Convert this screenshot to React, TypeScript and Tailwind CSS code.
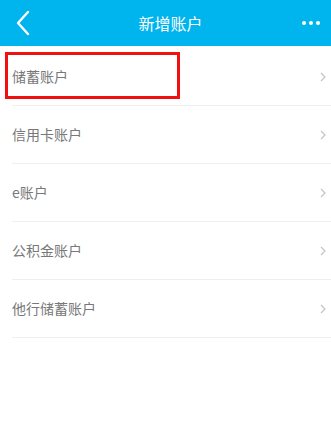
import React from 'react';

const accounts = ['储蓄账户', '信用卡账户', 'e账户', '公积金账户', '他行储蓄账户'];

export default function App() {
  return (
    <div
      className="w-[331px] h-[440px] bg-white overflow-hidden"
      style={{ fontFamily: '"Noto Sans CJK SC", "Noto Sans", sans-serif' }}
    >
      {/* Header */}
      <div className="h-[46px] bg-[#00b4ee] flex items-center justify-between px-[14px] relative">
        <svg width="16" height="26" viewBox="0 0 16 26" className="ml-[1px]">
          <path d="M13 2 L3 13 L13 24" fill="none" stroke="#fff" strokeWidth="2.4" strokeLinecap="round" strokeLinejoin="round" />
        </svg>
        <span className="absolute left-0 right-0 text-center text-white text-[16px] pl-[10px] pointer-events-none">新增账户</span>
        <div className="flex gap-[3px] mr-[-3px]">
          <span className="w-[4px] h-[4px] rounded-full bg-white" />
          <span className="w-[4px] h-[4px] rounded-full bg-white" />
          <span className="w-[4px] h-[4px] rounded-full bg-white" />
        </div>
      </div>

      {/* List */}
      <div className="pl-[12px] pt-[2px]">
        {accounts.map((name, i) => (
          <div key={name} className="relative h-[58px] flex items-center justify-between border-b border-[#efefef] pr-[5px]">
            {i === 0 && (
              <div className="absolute left-[-7px] top-[4px] w-[175px] h-[47px] border-[3px] border-[#f01010]" />
            )}
            <span className="text-[14px] text-[#787878]">{name}</span>
            <svg width="6" height="10" viewBox="0 0 6 10">
              <path d="M1 1 L5 5 L1 9" fill="none" stroke="#c4c4c4" strokeWidth="1.2" />
            </svg>
          </div>
        ))}
      </div>
    </div>
  );
}
